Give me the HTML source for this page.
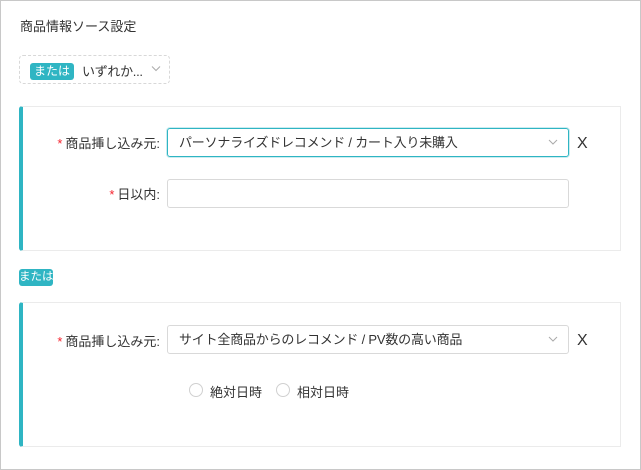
<!DOCTYPE html>
<html><head><meta charset="utf-8"><style>
*{box-sizing:border-box;margin:0;padding:0}
body{width:641px;height:470px;background:#fff;font-family:"Liberation Sans","Noto Sans CJK JP",sans-serif;color:#333;font-size:13px;position:relative;overflow:hidden}
.frame{position:absolute;left:0;top:0;width:641px;height:470px;border:1px solid #c8c8c8}
.abs{position:absolute;white-space:nowrap}
.badge{background:#2fb5c3;color:#fff;border-radius:3px;font-size:12px;line-height:17px;text-align:center;white-space:nowrap}
.card{position:absolute;left:19px;width:602px;height:145px;border:1px solid #ebebeb;border-left:4px solid #2fb5c3;border-radius:3px 0 0 3px}
.star{color:#f5222d;margin-right:3px}
.sel{position:absolute;left:167px;width:402px;height:29px;border:1px solid #d9d9d9;border-radius:3px;padding-left:11px;line-height:27px;font-size:13px;letter-spacing:-0.2px;white-space:nowrap}
.chev{position:absolute;right:10px;top:8px;width:10px;height:10px}
.x{position:absolute;left:577px;font-size:16px;color:#333;font-weight:300}
.radio{position:absolute;width:14px;height:14px;border:1px solid #d0d0d0;border-radius:50%}
</style></head><body>
<div class="frame"></div>
<div class="abs" style="left:20px;top:16px;font-size:13px">商品情報ソース設定</div>
<div class="abs" style="left:19px;top:55px;width:151px;height:29px;border:1px dashed #d8d8d8;border-radius:4px"></div>
<div class="abs badge" style="left:30px;top:63px;width:44px;">または</div>
<div class="abs" style="left:82px;top:61px;font-size:13px;letter-spacing:-0.3px">いずれか...</div>
<svg class="abs" style="left:151px;top:65px" width="10" height="8"><path d="M1 1.5L5 5.5L9 1.5" fill="none" stroke="#aaa" stroke-width="1"/></svg>

<div class="card" style="top:106px"></div>
<div class="abs" style="left:0;top:133px;width:160px;text-align:right"><span class="star">*</span>商品挿し込み元:</div>
<div class="sel" style="top:128px;border-color:#2fb5c3;box-shadow:0 0 0 1px rgba(47,181,195,.25)">パーソナライズドレコメンド / カート入り未購入<svg class="chev" viewBox="0 0 10 10"><path d="M1 3L5 7L9 3" fill="none" stroke="#aaa"/></svg></div>
<div class="x" style="top:135px">X</div>
<div class="abs" style="left:0;top:184px;width:160px;text-align:right"><span class="star">*</span>日以内:</div>
<div class="sel" style="top:179px"></div>

<div class="abs badge" style="left:19px;top:269px;width:34px;font-size:11.5px">または</div>

<div class="card" style="top:302px"></div>
<div class="abs" style="left:0;top:331px;width:160px;text-align:right"><span class="star">*</span>商品挿し込み元:</div>
<div class="sel" style="top:325px">サイト全商品からのレコメンド / PV数の高い商品<svg class="chev" viewBox="0 0 10 10"><path d="M1 3L5 7L9 3" fill="none" stroke="#aaa"/></svg></div>
<div class="x" style="top:332px">X</div>
<div class="radio" style="left:189px;top:383px"></div>
<div class="abs" style="left:210px;top:382px">絶対日時</div>
<div class="radio" style="left:276px;top:383px"></div>
<div class="abs" style="left:297px;top:382px">相対日時</div>
</body></html>
